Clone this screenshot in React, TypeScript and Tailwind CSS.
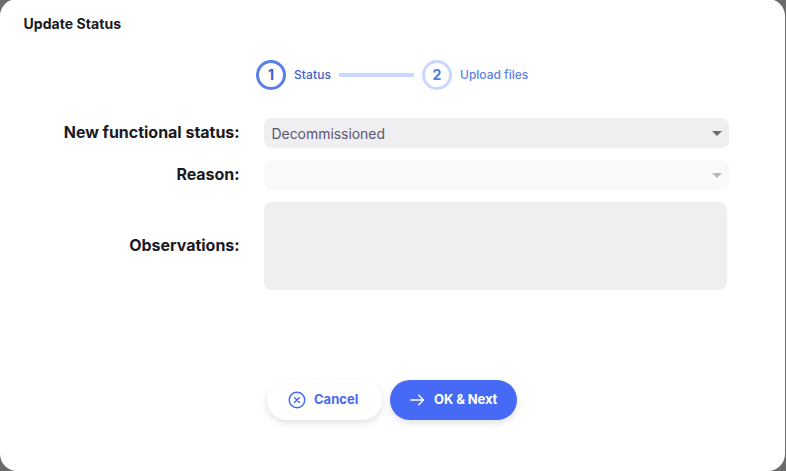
import type { ReactNode } from "react";

function Step({ n, label, active }: { n: number; label: string; active?: boolean }) {
  return (
    <div className="flex items-center gap-2">
      <div
        className={
          "flex size-[30px] items-center justify-center rounded-full border-3 text-sm font-bold " +
          (active ? "border-[#587fea] text-[#3f5ec9]" : "border-[#c8d7ff] text-[#5379e6]")
        }
      >
        {n}
      </div>
      <span className={"w-[37px] text-[12px] font-medium whitespace-nowrap " + (active ? "tracking-[0.1px] text-[#3f5ed0]" : "text-[#5b80ec]")}>
        {label}
      </span>
    </div>
  );
}

function Caret({ className }: { className: string }) {
  return (
    <svg width="10" height="5" viewBox="0 0 10 5" className={className}>
      <path d="M0 0h10L5 5z" fill="currentColor" />
    </svg>
  );
}

function Label({ children }: { children: ReactNode }) {
  return <div className="w-[240px] pr-[0.4px] pb-0.5 text-right text-base leading-6 font-bold tracking-[-0.02px] text-[#1a1a24]">{children}</div>;
}

export default function App() {
  return (
    <div className="h-[471px] w-[786px] overflow-hidden bg-[#6b6b6b] pr-px font-['Inter',sans-serif]">
      <div className="-mt-px flex h-[472px] flex-col rounded-[17px] bg-white">
        <h1 className="mt-[15px] ml-[23.5px] text-sm leading-5 font-bold tracking-[0.06px] text-[#1a1a24]">Update Status</h1>

        <div className="mt-[26px] ml-64 flex h-[30px] items-center gap-2">
          <Step n={1} label="Status" active />
          <div className="h-1 w-[75px] bg-[#c8d7ff]" />
          <Step n={2} label="Upload files" />
        </div>

        <div className="mt-7 flex flex-col gap-3">
          <div className="flex h-[30px] items-center gap-6">
            <Label>New functional status:</Label>
            <div className="flex h-[30px] w-[465px] items-center justify-between rounded-lg bg-[#efeff1] pr-[7px] pl-[7.5px]">
              <span className="pt-0.5 text-sm tracking-[-0.05px] text-[#5b5675]">Decommissioned</span>
              <Caret className="text-[#6c6c6e]" />
            </div>
          </div>
          <div className="flex h-[30px] items-center gap-6">
            <Label>Reason:</Label>
            <div className="flex h-[30px] w-[465px] items-center justify-end rounded-lg bg-[#f9f9fb] pr-[7px]">
              <Caret className="text-[#b7b7b9]" />
            </div>
          </div>
          <div className="flex h-[88px] items-center gap-6">
            <Label>Observations:</Label>
            <div className="h-[88px] w-[463px] rounded-lg bg-[#efeff1]" />
          </div>
        </div>

        <div className="mt-[90px] ml-[267px] flex gap-2 text-[13px] font-bold">
          <button className="flex h-10 w-[115px] items-center rounded-full bg-white pl-[21px] text-[#466af6] shadow-[0_3px_7px_rgba(0,0,0,0.12)]">
            <svg width="18" height="18" viewBox="0 0 18 18" fill="none" stroke="currentColor" strokeWidth="1.5" strokeLinecap="round">
              <circle cx="9" cy="9" r="7.75" />
              <path d="m6.7 6.7 4.6 4.6M11.3 6.7l-4.6 4.6" />
            </svg>
            <span className="ml-2">Cancel</span>
          </button>
          <button className="flex h-10 w-[127px] items-center rounded-full bg-[#466af6] pl-5 text-white shadow-[0_3px_7px_rgba(0,0,0,0.12)]">
            <svg width="15" height="14" viewBox="0 0 15 14" fill="none" stroke="currentColor" strokeWidth="1.3" strokeLinecap="round" strokeLinejoin="round">
              <path d="M.8 7h12.7M8.7 2.2 13.5 7l-4.8 4.8" />
            </svg>
            <span className="ml-[9px] tracking-[-0.1px] whitespace-nowrap">OK &amp; Next</span>
          </button>
        </div>
      </div>
    </div>
  );
}
